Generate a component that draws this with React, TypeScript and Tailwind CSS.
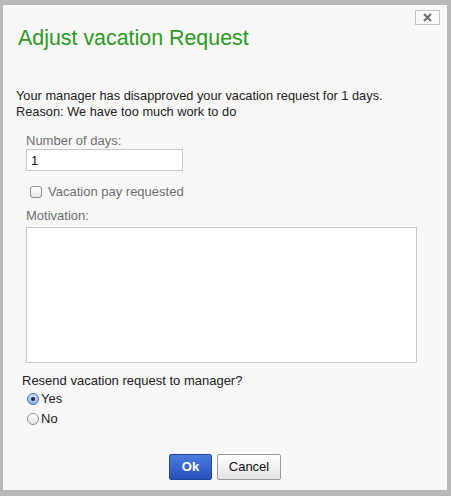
export default function App() {
  return (
    <div className="h-[496px] w-[451px] bg-[#b9b9b9] pl-[3px] pr-[4px] pt-[5px] pb-[6px] font-['Liberation_Sans',Arial,sans-serif]">
      <div className="relative h-full bg-[#f8f8f8]">
        <button
          type="button"
          className="absolute right-[7px] top-[5px] flex h-[15px] w-[25px] items-center justify-center border border-[#c4c4c4] bg-[#fafafa] text-[#666]"
        >
          <svg width="9" height="9" viewBox="0 0 9 9">
            <path d="M1 1L8 8M8 1L1 8" stroke="#6b6b6b" strokeWidth="2" />
          </svg>
        </button>

        <h1 className="pl-[15px] pt-[19px] text-[21.4px] leading-[28px] text-[#2c9a22]">Adjust vacation Request</h1>

        <p className="mt-[36px] pl-[13px] text-[12.8px] leading-[16px] text-[#222]">
          Your manager has disapproved your vacation request for 1 days.
          <br />
          Reason: We have too much work to do
        </p>

        <div className="mt-[13px] pl-[23px] pr-[30px]">
          <div className="text-[13px] leading-[16px] text-[#6f6f6f]">Number of days:</div>
          <input
            type="text"
            defaultValue="1"
            className="block h-[22px] w-[157px] border border-[#c8c8c8] bg-white px-[4px] text-[13px] text-[#111] outline-none"
          />
          <label className="mt-[13px] flex items-center gap-[6px] pl-[4px] text-[13px] leading-[16px] text-[#6f6f6f]">
            <span className="h-[12px] w-[12px] rounded-[3px] border border-[#8f8f8f] bg-gradient-to-b from-white to-[#e8e8e8]" />
            Vacation pay requested
          </label>
          <div className="mt-[8px] text-[13px] leading-[16px] text-[#6f6f6f]">Motivation:</div>
          <textarea className="mt-[3px] block h-[136px] w-full resize-none border border-[#c8c8c8] bg-white outline-none" />
        </div>

        <div className="mt-[10px] pl-[19px] text-[13px] leading-[16px] text-[#222]">
          <div>Resend vacation request to manager?</div>
          <label className="mt-[2px] flex items-center gap-[2px] pl-[5px]">
            <span className="flex h-[12px] w-[12px] items-center justify-center rounded-full border border-[#3a6fc0] bg-gradient-to-b from-[#cfe0f6] to-[#8fb3e8]">
              <span className="h-[4px] w-[4px] rounded-full bg-[#1b2a44]" />
            </span>
            Yes
          </label>
          <label className="mt-[4px] flex items-center gap-[2px] pl-[5px]">
            <span className="h-[12px] w-[12px] rounded-full border border-[#8f8f8f] bg-gradient-to-b from-white to-[#e6e6e6]" />
            No
          </label>
        </div>

        <div className="mt-[27px] flex justify-center gap-[5px]">
          <button
            type="button"
            className="h-[26px] w-[43px] rounded-[2px] border border-[#23479a] bg-gradient-to-b from-[#4c7be0] to-[#2751b8] text-[13px] font-bold text-white"
          >
            Ok
          </button>
          <button
            type="button"
            className="h-[26px] w-[64px] rounded-[2px] border border-[#9a9a9a] bg-gradient-to-b from-white to-[#e4e4e4] text-[13px] text-[#111]"
          >
            Cancel
          </button>
        </div>
      </div>
    </div>
  );
}
